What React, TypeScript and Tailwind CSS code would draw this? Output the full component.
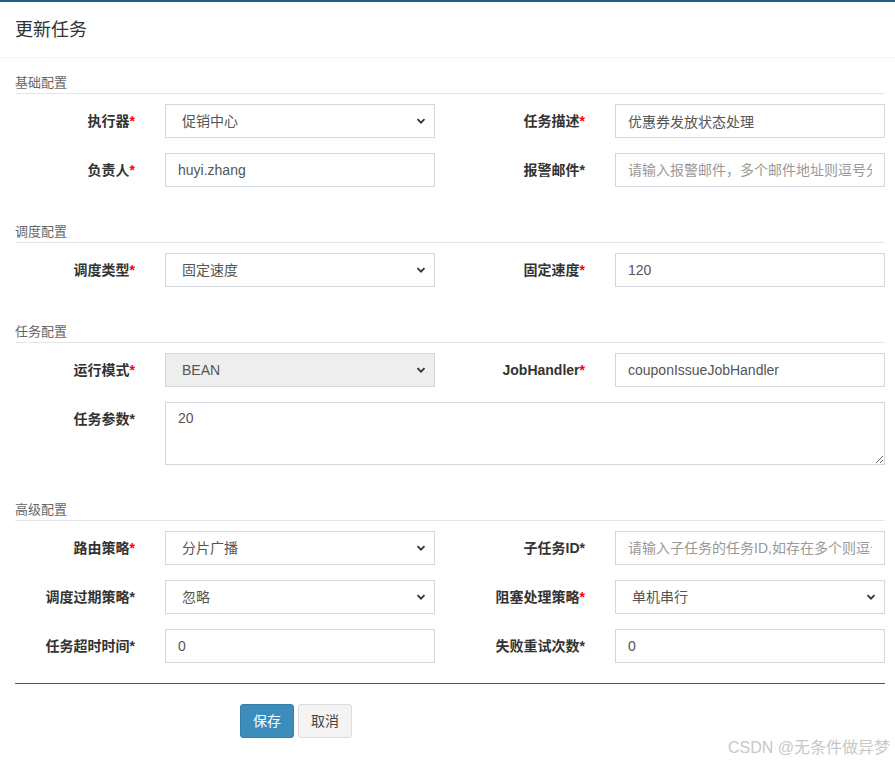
import React from "react";

const font = { fontFamily: '"Liberation Sans", "Noto Sans CJK SC", sans-serif' };

function Label({ text, red, top }: { text: string; red?: boolean; top?: boolean }) {
  return (
    <label
      className={`pr-[15px] text-right text-[14px] font-bold text-[#333] ${
        top ? "pt-[7px] leading-[20px]" : "flex h-[34px] items-center justify-end"
      }`}
    >
      {text}
      <span className={red ? "text-[#f00]" : "text-[#333]"}>*</span>
    </label>
  );
}

function Select({ value, disabled }: { value: string; disabled?: boolean }) {
  return (
    <div
      className={`flex h-[34px] items-center justify-between border border-[#d2d6de] pl-[16px] pr-[8px] text-[14px] text-[#555] ${
        disabled ? "bg-[#eeeeee]" : "bg-white"
      }`}
    >
      <span>{value}</span>
      <svg width="10" height="10" viewBox="0 0 10 10" fill="none">
        <path d="M1.5 3.2 L5 6.7 L8.5 3.2" stroke="#333" strokeWidth="1.8" />
      </svg>
    </div>
  );
}

function Input({ value, placeholder }: { value?: string; placeholder?: string }) {
  return (
    <input
      readOnly
      defaultValue={value}
      placeholder={placeholder}
      className="h-[34px] w-full border border-[#d2d6de] bg-white px-[12px] text-[14px] text-[#555] outline-none placeholder:text-[#999]"
      style={font}
    />
  );
}

function Legend({ text, className }: { text: string; className: string }) {
  return (
    <div className={`ml-[15px] mr-[10px] border-b border-[#e5e5e5] text-[13px] leading-[20px] text-[#666] ${className}`}>
      {text}
    </div>
  );
}

const grid = "grid grid-cols-[150px_270px_150px_270px] gap-x-[15px] gap-y-[15px]";

export default function App() {
  return (
    <div className="relative min-h-[765px] w-[895px] bg-white" style={font}>
      <div className="flex h-[58px] items-center border-t-2 border-b border-t-[#245f82] border-b-[#f4f4f4] px-[15px] pt-[1px]">
        <h4 className="text-[18px] text-[#333]">更新任务</h4>
      </div>

      <Legend text="基础配置" className="mt-[15px]" />
      <div className={`${grid} mt-[10px]`}>
        <Label text="执行器" red />
        <Select value="促销中心" />
        <Label text="任务描述" red />
        <Input value="优惠券发放状态处理" />
        <Label text="负责人" red />
        <Input value="huyi.zhang" />
        <Label text="报警邮件" />
        <Input placeholder="请输入报警邮件，多个邮件地址则逗号分隔" />
      </div>

      <Legend text="调度配置" className="mt-[35px]" />
      <div className={`${grid} mt-[10px]`}>
        <Label text="调度类型" red />
        <Select value="固定速度" />
        <Label text="固定速度" red />
        <Input value="120" />
      </div>

      <Legend text="任务配置" className="mt-[35px]" />
      <div className={`${grid} mt-[10px]`}>
        <Label text="运行模式" red />
        <Select value="BEAN" disabled />
        <Label text="JobHandler" red />
        <Input value="couponIssueJobHandler" />
        <Label text="任务参数" top />
        <textarea
          readOnly
          defaultValue="20"
          className="col-span-3 h-[63px] border border-[#d2d6de] px-[12px] py-[5px] text-[14px] text-[#555] outline-none"
          style={font}
        />
      </div>

      <Legend text="高级配置" className="mt-[35px]" />
      <div className={`${grid} mt-[10px]`}>
        <Label text="路由策略" red />
        <Select value="分片广播" />
        <Label text="子任务ID" />
        <Input placeholder="请输入子任务的任务ID,如存在多个则逗号分隔" />
        <Label text="调度过期策略" />
        <Select value="忽略" />
        <Label text="阻塞处理策略" red />
        <Select value="单机串行" />
        <Label text="任务超时时间" />
        <Input value="0" />
        <Label text="失败重试次数" />
        <Input value="0" />
      </div>

      <hr className="ml-[15px] mr-[10px] mt-[20px] border-t border-[#555]" />

      <div className="mt-[20px] flex gap-[4px] pl-[240px]">
        <button className="h-[34px] w-[54px] rounded-[3px] border border-[#367fa9] bg-[#3c8dbc] text-[14px] text-white">
          保存
        </button>
        <button className="h-[34px] w-[54px] rounded-[3px] border border-[#ddd] bg-[#f4f4f4] text-[14px] text-[#444]">
          取消
        </button>
      </div>

      <div className="absolute bottom-[5px] right-[5px] text-[16px] text-[#c8c8c8]">CSDN @无条件做异梦</div>
    </div>
  );
}
